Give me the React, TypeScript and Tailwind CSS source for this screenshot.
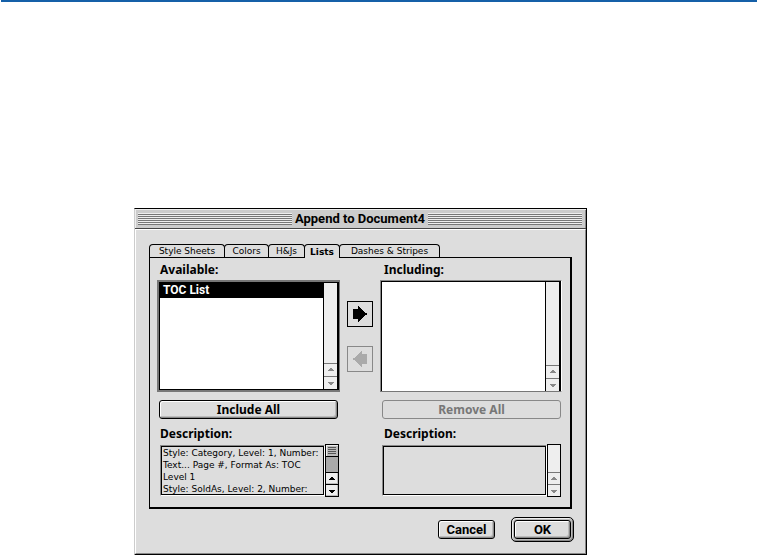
import { useState } from "react";
import clsx from "clsx";

const TABS = [
  { label: "Style Sheets", width: "w-[76px]" },
  { label: "Colors", width: "w-[45px]" },
  { label: "H&Js", width: "w-[37px]" },
  { label: "Lists", width: "w-9" },
  { label: "Dashes & Stripes", width: "w-[101px]" },
];

const DESCRIPTION = [
  "Style: Category, Level: 1, Number:",
  "Text... Page #, Format As: TOC",
  "Level 1",
  "Style: SoldAs, Level: 2, Number:",
].join("\n");

function TitleStripes() {
  return (
    <div className="flex h-3 flex-1 flex-col">
      {[0, 1, 2, 3, 4, 5].map((line) => (
        <div key={line} className="h-[2px] border-t border-[#eeeeee] bg-[#777777]" />
      ))}
    </div>
  );
}

function ScrollBar({ enabled = false, tall = false }: { enabled?: boolean; tall?: boolean }) {
  const button = clsx(
    "flex w-full shrink-0 items-center justify-center border-t bg-[#eeeeee]",
    tall ? "h-[13px]" : "h-3",
    enabled
      ? "border-black text-black shadow-[inset_-1px_-1px_0_#bbbbbb]"
      : "border-[#777777] text-[#888888]",
  );

  return (
    <div className={clsx("flex h-full w-full flex-col", enabled ? "bg-[#aaaaaa]" : "bg-[#eeeeee]")}>
      {enabled && (
        <div className="flex h-3 shrink-0 flex-col items-center justify-center gap-px border-b border-black bg-[#bbbbbb] shadow-[inset_1px_1px_0_#eeeeee]">
          {[0, 1, 2, 3].map((line) => (
            <div key={line} className="h-px w-2 bg-[#555555]" />
          ))}
        </div>
      )}
      <div className="flex-1" />
      <button type="button" aria-label="Scroll up" disabled={!enabled} className={button}>
        <svg width="8" height="4" viewBox="0 0 8 4" fill="currentColor" shapeRendering="crispEdges">
          <path d="M3 0h2v1h1v1h1v1H1V2h1V1h1z" />
        </svg>
      </button>
      <button type="button" aria-label="Scroll down" disabled={!enabled} className={button}>
        <svg width="8" height="4" viewBox="0 0 8 4" fill="currentColor" shapeRendering="crispEdges">
          <path d="M1 1h6v1H6v1H5v1H3V3H2V2H1z" />
        </svg>
      </button>
    </div>
  );
}

function ListBox({ label, items, focused = false }: { label: string; items: string[]; focused?: boolean }) {
  return (
    <div
      className={clsx(
        "flex h-28",
        focused
          ? "-ml-px border-2 border-r-[1px] border-[#777777]"
          : "border border-t-[#888888] border-r-white border-b-[#777777] border-l-[#888888]",
      )}
    >
      <div className={clsx("flex flex-1 border-t border-r-2 border-l border-black bg-white", focused && "border-b")}>
        <ul role="listbox" aria-label={label} className="flex-1">
          {items.map((item) => (
            <li
              key={item}
              role="option"
              aria-selected
              className="h-[15px] bg-black pl-[3px] font-['Roboto',sans-serif] text-xs leading-[15px] font-bold text-white"
            >
              {item}
            </li>
          ))}
        </ul>
        <div className="w-[14px] border-l border-black">
          <ScrollBar tall />
        </div>
      </div>
    </div>
  );
}

function DescriptionBox({ id, text, enabled = false }: { id: string; text: string; enabled?: boolean }) {
  return (
    <div className="mr-px ml-[2px] flex h-[53px] items-center">
      <div className="h-[51px] flex-1 border border-t-[#888888] border-r-white border-b-white border-l-[#888888]">
        <textarea
          id={id}
          readOnly
          value={text}
          className="block h-full w-full resize-none overflow-hidden border border-black bg-[#dddddd] pl-px font-['DejaVu_Sans',sans-serif] text-[9px] leading-3 whitespace-pre outline-none"
        />
      </div>
      <div className="h-full w-[14px] border border-black">
        <ScrollBar enabled={enabled} />
      </div>
    </div>
  );
}

function ArrowButton({ direction }: { direction: "right" | "left" }) {
  const disabled = direction === "left";

  return (
    <button
      type="button"
      aria-label={disabled ? "Remove from list" : "Add to list"}
      disabled={disabled}
      className={clsx(
        "flex size-[26px] items-center justify-center border",
        disabled ? "border-[#888888] text-[#aaaaaa]" : "border-black text-black",
      )}
    >
      <svg
        width="14"
        height="16"
        viewBox="0 0 14 16"
        fill="currentColor"
        className={clsx(disabled && "-scale-x-100")}
        shapeRendering="crispEdges"
      >
        <path d="M0 3h5V0h1v1h1v1h1v1h1v1h1v1h1v1h1v1h2v2h-2v1h-1v1h-1v1H9v1H8v1H7v1H6v1H5v-3H0z" />
      </svg>
    </button>
  );
}

const pushButton =
  "rounded-[3px] border border-black bg-[#dddddd] text-center shadow-[inset_1px_1px_0_#ffffff,inset_-1px_-1px_0_#888888,inset_-2px_-2px_0_#bbbbbb]";
const wideText = "font-['Noto_Sans',sans-serif] text-xs font-bold";

export default function App() {
  const [activeTab, setActiveTab] = useState("Lists");

  return (
    <main className="bg-white text-black">
      <div className="ml-px h-[2px] bg-[#1560a8]" />

      <section
        aria-labelledby="dialog-title"
        className="mt-[206px] mr-[170px] ml-[134px] border border-b-2 border-black border-l-[#cccccc] bg-[#dddddd] font-['Roboto',sans-serif]"
      >
        <header className="flex h-5 items-center gap-[3px] border-b border-[#444444] bg-[#cccccc] pr-1 pl-[3px] shadow-[inset_1px_1px_0_#eeeeee,inset_-1px_0_0_#888888]">
          <TitleStripes />
          <h1 id="dialog-title" className="text-[13px] leading-4 font-bold">
            Append to Document4
          </h1>
          <TitleStripes />
        </header>

        <div className="border border-t-white border-r-[#888888] border-b-[#888888] border-l-white px-[13px] pt-[14px] pb-[11px]">
          <div role="tablist" className="relative flex">
            {TABS.map(({ label, width }) => (
              <button
                key={label}
                type="button"
                role="tab"
                aria-selected={label === activeTab}
                onClick={() => setActiveTab(label)}
                className={clsx(
                  "-mr-px rounded-t-[4px] border-x border-t border-black bg-[#dddddd] text-center font-['DejaVu_Sans',sans-serif] text-[9px] leading-3 whitespace-nowrap",
                  width,
                  label === activeTab ? "-mb-px h-[14px] font-bold" : "h-[13px]",
                )}
              >
                {label}
              </button>
            ))}
          </div>

          <div className="flex gap-[7px] border-t border-r-2 border-b-2 border-l border-black px-2 pt-1 pb-[10px]">
            <div className="flex-1">
              <h2 className={clsx(wideText, "mb-[2px] ml-[2px] leading-4")}>Available:</h2>
              <ListBox label="Available" items={["TOC List"]} focused />
              <div className="mt-2 mr-[2px] ml-px flex">
                <button type="button" className={clsx(pushButton, wideText, "h-[19px] flex-1 leading-4")}>
                  Include All
                </button>
              </div>
              <label htmlFor="available-description" className={clsx(wideText, "mt-[7px] mb-[2px] ml-[2px] block leading-4")}>
                Description:
              </label>
              <DescriptionBox id="available-description" text={DESCRIPTION} enabled />
            </div>

            <div className="flex flex-col gap-[19px] pt-[39px]">
              <ArrowButton direction="right" />
              <ArrowButton direction="left" />
            </div>

            <div className="flex-1">
              <h2 className={clsx(wideText, "mb-[2px] ml-1 leading-4")}>Including:</h2>
              <ListBox label="Including" items={[]} />
              <div className="mt-2 mr-px ml-[2px] flex">
                <button
                  type="button"
                  disabled
                  className={clsx(
                    wideText,
                    "h-[19px] flex-1 rounded-[3px] border border-[#888888] text-center leading-4 text-[#777777]",
                  )}
                >
                  Remove All
                </button>
              </div>
              <label htmlFor="including-description" className={clsx(wideText, "mt-[7px] mb-[2px] ml-1 block leading-4")}>
                Description:
              </label>
              <DescriptionBox id="including-description" text="" />
            </div>
          </div>

          <div className="-mr-[2px] mt-2 flex items-center justify-end gap-4">
            <button type="button" className={clsx(pushButton, "h-[19px] w-[57px] text-[13px] leading-4 font-bold")}>
              Cancel
            </button>
            <div className="rounded-[5px] border border-black bg-[#bbbbbb] p-[2px] shadow-[inset_1px_1px_0_#eeeeee,inset_-1px_-1px_0_#888888]">
              <button type="button" className={clsx(pushButton, "block h-[19px] w-[57px] text-[13px] leading-4 font-bold")}>
                OK
              </button>
            </div>
          </div>
        </div>
      </section>
    </main>
  );
}
